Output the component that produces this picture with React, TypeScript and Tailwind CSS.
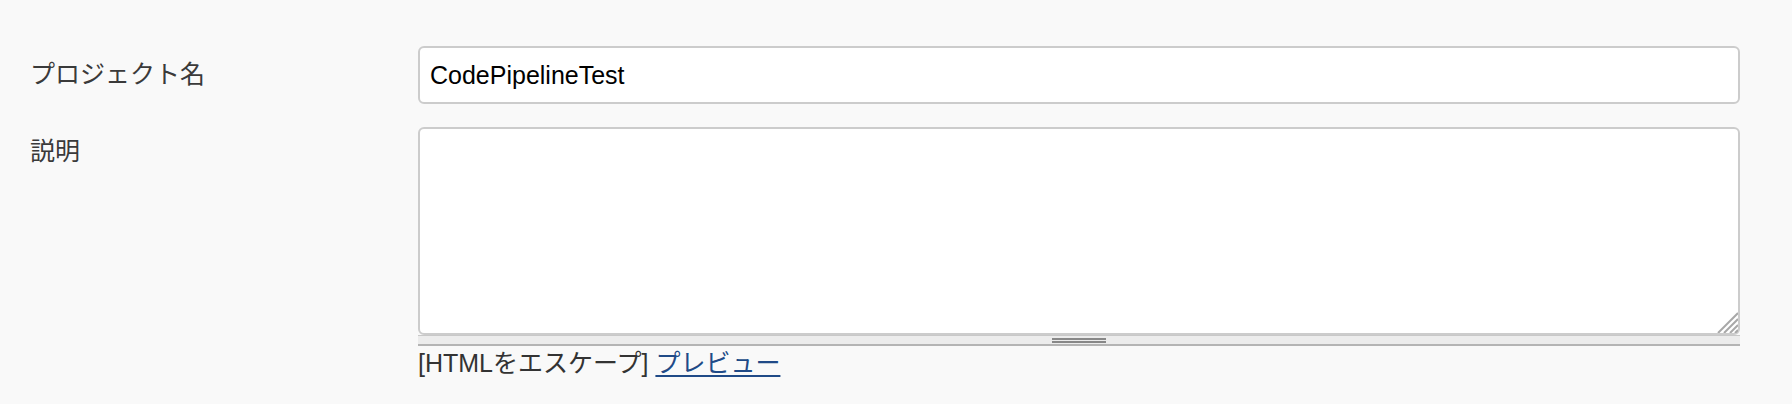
import React from "react";

const font = { fontFamily: '"Liberation Sans", "Noto Sans CJK JP", sans-serif' };

export default function App() {
  return (
    <div
      className="min-h-[404px] w-full bg-[#f9f9f9] pt-[46px] pl-[30px] pr-[52px] text-[25px] text-[#333]"
      style={font}
    >
      {/* Project name */}
      <div className="flex items-start">
        <label className="w-[388px] shrink-0 pt-[13px] leading-[30px] text-[#3a3a3a]">プロジェクト名</label>
        <input
          defaultValue="CodePipelineTest"
          className="h-[58px] flex-1 rounded-[6px] border-2 border-[#cccccc] bg-white px-[10px] text-[25px] text-black outline-none"
          style={font}
        />
      </div>

      {/* Description */}
      <div className="mt-[23px] flex items-start">
        <label className="w-[388px] shrink-0 pt-[9px] leading-[30px] text-[#3a3a3a]">説明</label>
        <div className="flex flex-1 flex-col">
          <div className="relative">
            <textarea
              className="block h-[208px] w-full resize-none rounded-[6px] border-2 border-[#cccccc] bg-white outline-none"
              style={font}
            />
            <svg
              className="absolute bottom-[2px] right-[2px]"
              width="22"
              height="22"
              viewBox="0 0 22 22"
            >
              <line x1="22" y1="2" x2="2" y2="22" stroke="#a8a8a8" strokeWidth="2" />
              <line x1="22" y1="8" x2="8" y2="22" stroke="#a8a8a8" strokeWidth="2" />
              <line x1="22" y1="14" x2="14" y2="22" stroke="#a8a8a8" strokeWidth="2" />
              <line x1="22" y1="19" x2="19" y2="22" stroke="#a8a8a8" strokeWidth="2" />
            </svg>
          </div>
          <div className="flex h-[11px] items-center justify-center border-t border-b-2 border-t-[#c8c8c8] border-b-[#b4b4b4] bg-[#ececec]">
            <div className="flex w-[54px] flex-col gap-[1px]">
              <div className="h-[2px] bg-[#888]" />
              <div className="h-[2px] bg-[#888]" />
            </div>
          </div>
          <div className="mt-[2px] leading-[30px]">
            [HTMLをエスケープ]{" "}
            <a href="#" className="text-[#204a87] underline underline-offset-[3px]">
              プレビュー
            </a>
          </div>
        </div>
      </div>
    </div>
  );
}
